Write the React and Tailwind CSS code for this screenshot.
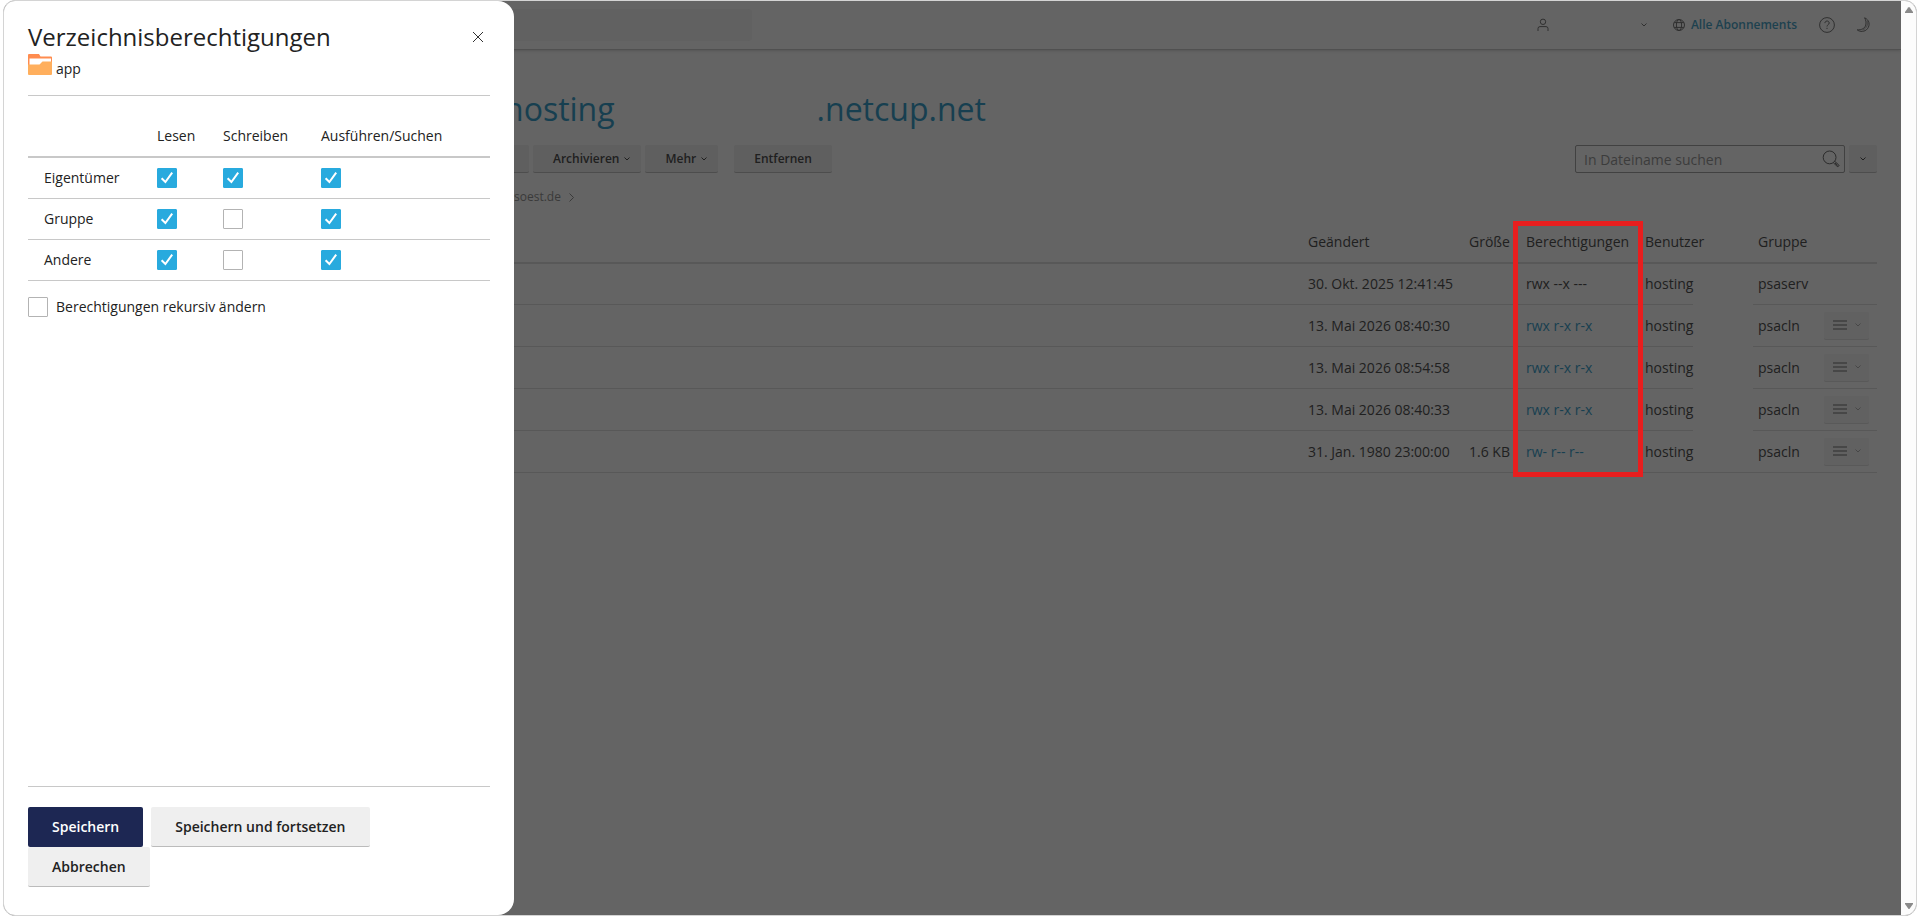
import { useState } from "react";

const files = [
  { changed: "30. Okt. 2025 12:41:45", size: "", perms: "rwx --x ---", user: "hosting", group: "psaserv", parent: true },
  { changed: "13. Mai 2026 08:40:30", size: "", perms: "rwx r-x r-x", user: "hosting", group: "psacln" },
  { changed: "13. Mai 2026 08:54:58", size: "", perms: "rwx r-x r-x", user: "hosting", group: "psacln" },
  { changed: "13. Mai 2026 08:40:33", size: "", perms: "rwx r-x r-x", user: "hosting", group: "psacln" },
  { changed: "31. Jan. 1980 23:00:00", size: "1.6 KB", perms: "rw- r-- r--", user: "hosting", group: "psacln" },
];

const rights = ["Lesen", "Schreiben", "Ausführen/Suchen"];

const Chevron = ({ className = "" }) => (
  <svg
    viewBox="0 0 6 4"
    className={`w-[6px] h-[4px] shrink-0 ${className}`}
    fill="none"
    stroke="currentColor"
  >
    <path d="M0.5 0.5 3 3 5.5 0.5" />
  </svg>
);

const Checkbox = ({ checked, ...props }) => (
  <span className="grid size-5 shrink-0">
    <input
      type="checkbox"
      checked={checked}
      className="appearance-none col-start-1 row-start-1 size-5 rounded-[1px] border border-[#b3b3b3] bg-white checked:border-[#28aade] checked:bg-[#28aade]"
      {...props}
    />
    {checked && (
      <svg
        viewBox="0 0 20 20"
        className="col-start-1 row-start-1 size-5 pointer-events-none"
        fill="none"
        stroke="white"
        strokeWidth="2"
      >
        <path d="M4.6 10.2 8.4 14 15.2 4.6" />
      </svg>
    )}
  </span>
);

const ToolButton = ({ children, menu }) => (
  <button
    type="button"
    className={`h-7 pl-5 flex items-center gap-[5px] rounded-xs bg-[#5f5f5f] border-b border-[#4d4d4d] text-xs font-semibold ${
      menu ? "pr-[11px]" : "pr-5"
    }`}
  >
    {children}
    {menu && <Chevron />}
  </button>
);

const TopBar = () => (
  <header className="h-[49px] pl-[500px] pr-[30px] flex items-center border-b border-[#505050] shadow-sm shrink-0">
    <div className="w-[248px] h-8 rounded bg-[#616161]"></div>
    <div className="ml-auto flex items-center text-[#303030]">
      <button type="button" aria-label="Konto" className="flex items-center gap-[92px]">
        <svg viewBox="0 0 12 14" className="w-3 h-[14px]" fill="none" stroke="currentColor">
          <circle cx="6" cy="3.8" r="2.7" />
          <path d="M1 13V10.6Q1 8.6 3 8.6H9Q11 8.6 11 10.6V13" />
        </svg>
        <Chevron />
      </button>
      <a href="#abos" className="ml-[26px] flex items-center gap-[6px] text-xs font-semibold text-[#1d414f]">
        <svg viewBox="0 0 12 12" className="size-3 text-[#303030]" fill="none" stroke="currentColor">
          <circle cx="6" cy="6" r="5.5" />
          <ellipse cx="6" cy="6" rx="2.6" ry="5.5" />
          <path d="M1.2 3.6H10.8M1.2 8.4H10.8" />
        </svg>
        Alle Abonnements
      </a>
      <button type="button" aria-label="Hilfe" className="ml-[22px]">
        <svg viewBox="0 0 16 16" className="size-4" fill="none" stroke="currentColor">
          <circle cx="8" cy="8" r="7.4" />
          <path d="M5.9 6.1C5.9 3.3 10.2 3.3 10.2 6C10.2 7.7 8 7.7 8 9.5M8 10.8V12" />
        </svg>
      </button>
      <button type="button" aria-label="Dunkles Design" className="ml-5">
        <svg viewBox="0 0 16 16" className="size-4" fill="none" stroke="currentColor">
          <path d="M9.6 0.8C14.4 2.8 15.4 8 12.4 11.8C9.8 15 5 15.2 2.2 12.8C6.4 13.2 10 11.4 10.8 8C11.4 5.2 10.8 3 9.6 0.8Z" />
          <path d="M12.2 4C13.4 7.4 11.6 11.4 7.6 13.2" strokeWidth="0.6" />
        </svg>
      </button>
    </div>
  </header>
);

const FileTable = () => (
  <div className="relative mt-[15px]">
    <table className="w-full table-fixed border-separate border-spacing-0 text-sm text-left">
      <colgroup>
        <col />
        <col className="w-[161px]" />
        <col className="w-[57px]" />
        <col className="w-[119px]" />
        <col className="w-[53px]" />
        <col className="w-[60px]" />
        <col className="w-[63px]" />
        <col className="w-[61px]" />
      </colgroup>
      <thead>
        <tr className="*:h-[43px] *:p-0 *:pl-[5px] *:font-normal *:border-b-2 *:border-[#585858]">
          <th></th>
          <th>Geändert</th>
          <th>Größe</th>
          <th>Berechtigungen</th>
          <th colSpan={2}>Benutzer</th>
          <th>Gruppe</th>
          <th></th>
        </tr>
      </thead>
      <tbody>
        {files.map((file, i) => (
          <tr
            key={i}
            className={`*:p-0 *:pl-[5px] *:border-b *:border-[#585858] *:whitespace-nowrap ${
              file.parent ? "*:h-[41px]" : "*:h-[42px]"
            }`}
          >
            <td></td>
            <td>{file.changed}</td>
            <td>{file.size}</td>
            <td>
              {file.parent ? (
                file.perms
              ) : (
                <a href="#rechte" className="text-[#173f50]">
                  {file.perms}
                </a>
              )}
            </td>
            <td>{file.user}</td>
            <td className={i < files.length - 1 ? "border-b-0!" : ""}></td>
            <td>{file.group}</td>
            <td>
              {!file.parent && (
                <button
                  type="button"
                  aria-label="Aktionen"
                  className="ml-[3px] pl-[9px] w-[45px] h-7 flex items-center gap-2 rounded-xs bg-[#616161] border-b border-[#595959] text-[#474747]"
                >
                  <svg viewBox="0 0 14 10" className="w-[14px] h-[10px]" stroke="currentColor" strokeWidth="2">
                    <path d="M0 1H14M0 5H14M0 9H14" />
                  </svg>
                  <Chevron />
                </button>
              )}
            </td>
          </tr>
        ))}
      </tbody>
    </table>
    <div className="absolute top-0 -bottom-1 right-[234px] w-[130px] border-5 border-[#e81e1e] pointer-events-none"></div>
  </div>
);

const FileManager = () => (
  <main className="flex-1 min-w-0 flex flex-col text-[#202020]">
    <TopBar />
    <div className="pt-[39px] pr-6">
      <h1 className="pl-[500px] flex gap-[202px] text-[32px] leading-[40px] text-[#173f50]">
        <span>hosting</span>
        <span>.netcup.net</span>
      </h1>
      <div className="mt-4 pl-[500px] flex items-center gap-1">
        <div className="w-[25px] h-7 rounded-xs bg-[#5f5f5f] border-b border-[#4d4d4d]"></div>
        <ToolButton menu>Archivieren</ToolButton>
        <ToolButton menu>Mehr</ToolButton>
        <div className="ml-3">
          <ToolButton>Entfernen</ToolButton>
        </div>
        <div className="ml-auto w-[270px] h-7 flex items-center rounded-xs border border-[#414141]">
          <input
            type="text"
            aria-label="In Dateiname suchen"
            placeholder="In Dateiname suchen"
            className="flex-1 min-w-0 pt-[2px] pl-2 text-sm outline-none placeholder:text-[#3c3c3c]"
          />
          <button type="button" aria-label="Suchen" className="mr-1 text-[#2c2c2c]">
            <svg viewBox="0 0 18 18" className="size-[18px]" fill="none" stroke="currentColor">
              <circle cx="7.6" cy="7.4" r="6.4" />
              <path d="M11.4 12.8 15.2 16.4Q16.4 17 17 15.8L16.8 15 12.8 11.4M13 13 15.6 15.4" />
            </svg>
          </button>
        </div>
        <button
          type="button"
          aria-label="Suchoptionen"
          className="w-7 h-7 flex items-center justify-center rounded-xs bg-[#5f5f5f] border-b border-[#4d4d4d]"
        >
          <Chevron />
        </button>
      </div>
      <nav className="mt-[15px] pl-[510px] flex items-center gap-2 text-xs leading-[18px] text-[#3a3a3a]">
        <a href="#soest">soest.de</a>
        <svg viewBox="0 0 5 9" className="w-[5px] h-[9px]" fill="none" stroke="currentColor">
          <path d="M0.5 0.5 4.5 4.5 0.5 8.5" />
        </svg>
      </nav>
      <FileTable />
    </div>
  </main>
);

const PermissionsDrawer = () => {
  const [perms, setPerms] = useState({
    Eigentümer: [true, true, true],
    Gruppe: [true, false, true],
    Andere: [true, false, true],
  });
  const [recursive, setRecursive] = useState(false);

  function toggle(name, index) {
    setPerms({ ...perms, [name]: perms[name].map((v, i) => (i === index ? !v : v)) });
  }

  return (
    <aside className="absolute inset-y-0 left-0 w-[510px] px-6 pt-5 pb-7 flex flex-col rounded-r-2xl bg-white text-sm text-[#222]">
      <div className="pb-4 border-b border-[#c8c8c8]">
        <div className="flex items-center justify-between">
          <h2 className="text-2xl leading-8">Verzeichnisberechtigungen</h2>
          <button type="button" aria-label="Schließen" className="mr-[6px] text-[#333]">
            <svg viewBox="0 0 12 12" className="size-3" fill="none" stroke="currentColor">
              <path d="M1 1 11 11M11 1 1 11" />
            </svg>
          </button>
        </div>
        <div className="mt-px h-[25px] flex gap-1">
          <svg viewBox="0 0 24 21" className="w-6 h-[21px]">
            <path d="M0 1Q0 0 1 0H11L12.5 2.5H23Q24 2.5 24 3.5V12H0Z" fill="#ff8c4f" />
            <path d="M1.5 4.5H23V12H1.5Z" fill="#fff" />
            <path d="M0 10.5H11.5L14.5 7.5H24V20Q24 21 23 21H1Q0 21 0 20Z" fill="#ffaf5d" />
          </svg>
          <span className="self-end">app</span>
        </div>
      </div>

      <table className="w-full table-fixed border-separate border-spacing-0 text-left">
        <colgroup>
          <col className="w-[129px]" />
          <col className="w-[66px]" />
          <col className="w-[98px]" />
          <col />
        </colgroup>
        <thead>
          <tr className="*:h-[62px] *:p-0 *:pt-5 *:font-normal *:border-b-2 *:border-[#c8c8c8]">
            <th></th>
            {rights.map((right) => (
              <th key={right}>{right}</th>
            ))}
          </tr>
        </thead>
        <tbody>
          {Object.keys(perms).map((name) => (
            <tr key={name} className="*:h-[41px] *:p-0 *:border-b *:border-[#c8c8c8]">
              <td className="pl-4!">{name}</td>
              {perms[name].map((value, i) => (
                <td key={i}>
                  <Checkbox
                    checked={value}
                    aria-label={`${name}: ${rights[i]}`}
                    onChange={() => toggle(name, i)}
                  />
                </td>
              ))}
            </tr>
          ))}
        </tbody>
      </table>

      <label className="mt-4 flex items-center gap-2">
        <Checkbox checked={recursive} onChange={(e) => setRecursive(e.target.checked)} />
        Berechtigungen rekursiv ändern
      </label>

      <div className="mt-auto pt-5 pr-20 flex flex-wrap gap-x-2 border-t border-[#c8c8c8] font-semibold">
        <button type="submit" className="h-10 px-6 rounded-xs bg-[#1d2753] text-white">
          Speichern
        </button>
        <button type="button" className="h-10 px-6 rounded-xs bg-[#efefef] border-b border-[#bbb]">
          Speichern und fortsetzen
        </button>
        <button type="button" className="h-10 px-6 rounded-xs bg-[#efefef] border-b border-[#bbb]">
          Abbrechen
        </button>
      </div>
    </aside>
  );
};

const App = () => {
  return (
    <div className="h-screen pl-[3px] pr-[3px] pb-[2px] flex bg-white font-['Open_Sans',sans-serif]">
      <div className="relative flex-1 min-w-0 flex rounded-xl border border-[#d4d4d4] bg-[#646464] overflow-hidden">
        <FileManager />
        <div className="w-[15px] py-[6px] flex flex-col items-center justify-between bg-[#fcfcfc] text-[#8a8a8a]">
          <svg viewBox="0 0 8 6" className="w-2 h-[6px]" fill="currentColor">
            <path d="M3.2 0.6Q4 -0.4 4.8 0.6L8 5V6H0V5Z" />
          </svg>
          <svg viewBox="0 0 8 6" className="w-2 h-[6px]" fill="currentColor">
            <path d="M3.2 5.4Q4 6.4 4.8 5.4L8 1V0H0V1Z" />
          </svg>
        </div>
        <PermissionsDrawer />
      </div>
    </div>
  );
};

export default App;
